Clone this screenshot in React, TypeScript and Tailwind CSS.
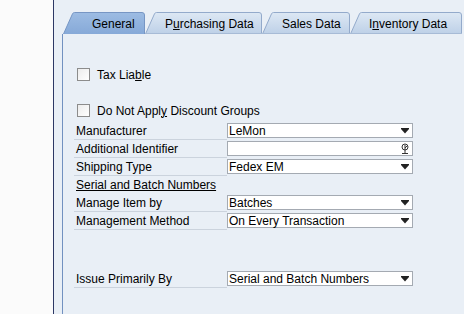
import React from 'react';

type TabProps = { w: number; active?: boolean; pl: string; children: React.ReactNode };

function Tab({ w, active, pl, children }: TabProps) {
  const d = `M0.5,22 L9.5,1.8 Q10.2,0.5 11.5,0.5 L${w - 3},0.5 Q${w - 0.5},0.5 ${w - 0.5},3 L${w - 0.5},22`;
  return (
    <div className="relative h-[22px] shrink-0" style={{ width: w }}>
      <svg className="absolute inset-0" width={w} height={22}>
        <defs>
          <linearGradient id={`g${w}`} x1="0" y1="0" x2="0" y2="1">
            <stop offset="0" stopColor={active ? '#9dbce3' : '#dde8f4'} />
            <stop offset="1" stopColor={active ? '#86a9d8' : '#bdd0e7'} />
          </linearGradient>
        </defs>
        <path d={d + ' Z'} fill={`url(#g${w})`} />
        <path d={d} fill="none" stroke={active ? '#7796c4' : '#93aacb'} />
        {!active && <line x1="0" y1="21.5" x2={w} y2="21.5" stroke="#a7bbd6" />}
      </svg>
      <div className={`relative flex h-full items-center pt-[2px] text-[12px] text-black ${pl}`}>{children}</div>
    </div>
  );
}

function Checkbox() {
  return <span className="block h-[13px] w-[13px] border border-[#8c8c8c] bg-gradient-to-br from-[#ececec] to-white" />;
}

function Arrow() {
  return (
    <svg width="8" height="6" viewBox="0 0 8 6" className="shrink-0">
      <rect x="0" y="0" width="8" height="1" fill="#222" />
      <polygon points="0,1 8,1 4,5.5" fill="#222" />
    </svg>
  );
}

function LinkIcon() {
  return (
    <svg width="8" height="12" viewBox="0 0 8 12" className="shrink-0">
      <circle cx="4" cy="4" r="3" fill="none" stroke="#333" strokeWidth="1" />
      <line x1="4" y1="2" x2="4" y2="10.5" stroke="#333" strokeWidth="1" />
      <line x1="4" y1="5" x2="6" y2="3" stroke="#333" strokeWidth="1" />
      <line x1="1" y1="10.5" x2="7" y2="10.5" stroke="#333" strokeWidth="1" />
    </svg>
  );
}

function Row({ label, value, icon }: { label: string; value?: string; icon?: 'arrow' | 'link' }) {
  return (
    <div className="flex h-[18px]">
      <div className="flex w-[153px] items-center border-b border-[#cbd3dd] pl-[2px] text-[12px] text-black">{label}</div>
      <div className="mt-[1px] flex h-[15px] w-[186px] items-center justify-between border border-[#a4aab2] bg-white pl-[1px] pr-[3px] text-[12px] text-black">
        <span>{value}</span>
        {icon === 'link' ? <LinkIcon /> : <Arrow />}
      </div>
    </div>
  );
}

export default function App() {
  return (
    <div className="flex h-[314px] w-[464px] overflow-hidden font-['Liberation_Sans',Arial,sans-serif]">
      <div className="w-[53px] shrink-0 bg-[#fbfbfb]" />
      <div className="w-px shrink-0 bg-[#2d3865]" />
      <div className="flex flex-1 flex-col bg-[#e9eff6] pl-[8px] pt-[12px]">
        {/* Tabs */}
        <div className="ml-px flex">
          <Tab w={82} active pl="pl-[29px]">General</Tab>
          <Tab w={117} pl="pl-[20px]">
            <span>P<span className="underline">u</span>rchasing Data</span>
          </Tab>
          <Tab w={88} pl="pl-[20px]">Sales Data</Tab>
          <Tab w={112} pl="pl-[19px]">
            <span>I<span className="underline">n</span>ventory Data</span>
          </Tab>
        </div>

        {/* Panel */}
        <div className="flex flex-1 flex-col border-l border-[#7291c0] pl-[11px]">
          <div className="mt-[34px] flex h-[13px] items-center gap-[7px] pl-[3px] text-[12px] text-black">
            <Checkbox />
            <span>Tax Lia<span className="underline">b</span>le</span>
          </div>
          <div className="mt-[23px] flex h-[13px] items-center gap-[7px] pl-[3px] text-[12px] text-black">
            <Checkbox />
            <span>Do Not Appl<span className="underline">y</span> Discount Groups</span>
          </div>

          <div className="mt-[5px] flex flex-col">
            <Row label="Manufacturer" value="LeMon" />
            <Row label="Additional Identifier" icon="link" />
            <Row label="Shipping Type" value="Fedex EM" />
            <div className="flex h-[18px] items-center pl-[2px] text-[12px] text-black">
              <span className="underline">Serial and Batch Numbers</span>
            </div>
            <Row label="Manage Item by" value="Batches" />
            <Row label="Management Method" value="On Every Transaction" />
            <div className="h-[40px]" />
            <Row label="Issue Primarily By" value="Serial and Batch Numbers" />
          </div>
        </div>
      </div>
    </div>
  );
}
